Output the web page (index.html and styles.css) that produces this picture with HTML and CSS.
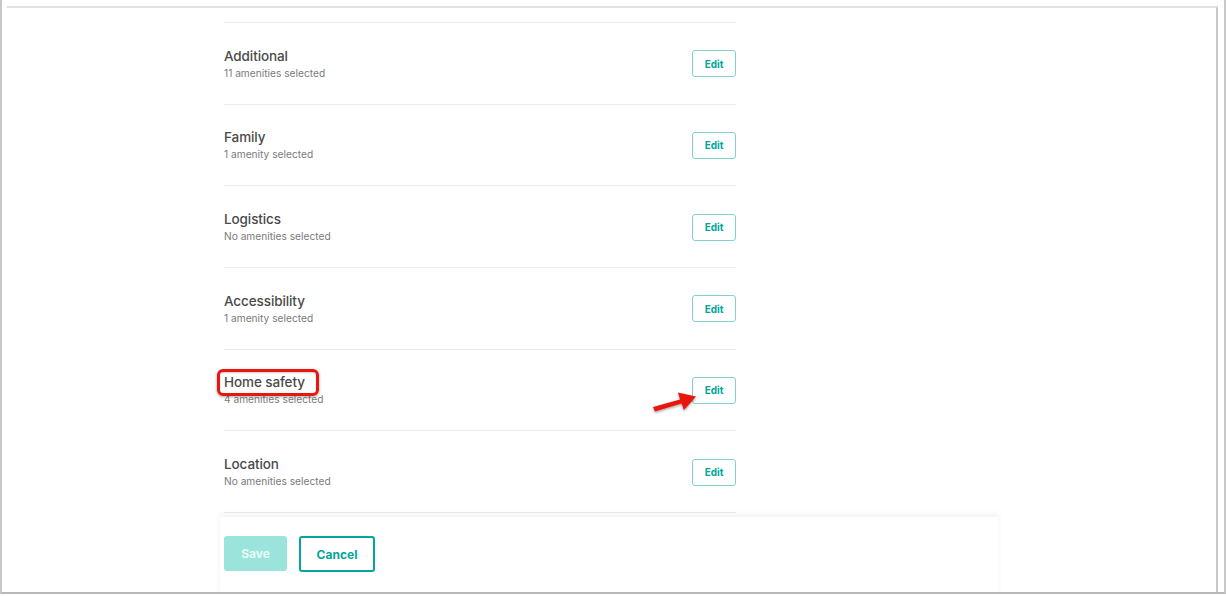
FILE: index.html
```html
<!DOCTYPE html>
<html>
<head>
<meta charset="utf-8">
<link rel="stylesheet" href="styles.css">
</head>
<body>
<div class="screen">
  <div class="window">
    <div class="list">
      <div class="row">
        <div class="info"><div class="title">Additional</div><div class="sub">11 amenities selected</div></div>
        <button class="edit">Edit</button>
      </div>
      <div class="row">
        <div class="info"><div class="title">Family</div><div class="sub">1 amenity selected</div></div>
        <button class="edit">Edit</button>
      </div>
      <div class="row">
        <div class="info"><div class="title">Logistics</div><div class="sub">No amenities selected</div></div>
        <button class="edit">Edit</button>
      </div>
      <div class="row">
        <div class="info"><div class="title">Accessibility</div><div class="sub">1 amenity selected</div></div>
        <button class="edit">Edit</button>
      </div>
      <div class="row">
        <div class="info"><div class="title">Home safety</div><div class="sub">4 amenities selected</div></div>
        <button class="edit">Edit</button>
      </div>
      <div class="row">
        <div class="info"><div class="title">Location</div><div class="sub">No amenities selected</div></div>
        <button class="edit">Edit</button>
      </div>
      <div class="row last"></div>
    </div>
    <div class="footer">
      <button class="save">Save</button>
      <button class="cancel">Cancel</button>
    </div>
    <div class="highlight"></div>
    <svg class="arrow" width="60" height="36" viewBox="0 0 60 36">
      <defs>
        <filter id="sh" x="-20%" y="-20%" width="140%" height="160%">
          <feDropShadow dx="0" dy="1.5" stdDeviation="1.2" flood-color="#000" flood-opacity="0.35"/>
        </filter>
      </defs>
      <g filter="url(#sh)">
        <path d="M3 29 L30 21.5 L28 14.5 L46 18.5 L34 32 L31.5 25.5 L5 33.5 Z" fill="#e8160c"/>
      </g>
    </svg>
  </div>
</div>
</body>
</html>
```

FILE: styles.css
```css
* { box-sizing: border-box; }
html, body {
  margin: 0;
  padding: 0;
  background: #fff;
}
body {
  width: 1226px;
  height: 596px;
  overflow: hidden;
  font-family: Inter, "Noto Sans", sans-serif;
}
.screen {
  width: 1226px;
  height: 594px;
  border-left: 2px solid #c8c8c8;
  border-right: 2px solid #c8c8c8;
  border-bottom: 2px solid #b8b8b8;
  padding: 6px 5px 0 5px;
}
.window {
  position: relative;
  height: 586px;
  border-top: 2px solid #e2e2e2;
  border-right: 2px solid #c8c8c8;
  margin-right: 1px;
  overflow: hidden;
}
.list {
  margin-left: 217px;
  width: 512px;
  padding-top: 14px;
}
.row {
  height: 81.67px;
  border-top: 1px solid #ebebeb;
  display: flex;
  align-items: center;
  justify-content: space-between;
}
.row.last {
  height: 40px;
}
.info {
  display: flex;
  flex-direction: column;
  gap: 2px;
}
.title {
  font-size: 13.5px;
  font-weight: 500;
  color: #4a4a4a;
  line-height: 18px;
  letter-spacing: -0.1px;
}
.sub {
  font-size: 10.2px;
  color: #7a7a7a;
  line-height: 13px;
}
.edit {
  width: 44px;
  height: 27px;
  border: 1.5px solid #80d3cc;
  border-radius: 3px;
  background: #fff;
  color: #00a699;
  font-family: Inter, "Noto Sans", sans-serif;
  font-size: 10px;
  font-weight: 700;
  padding: 0;
  margin-top: 1px;
}
.footer {
  position: absolute;
  left: 213px;
  top: 509px;
  width: 778px;
  height: 80px;
  background: #fff;
  box-shadow: 0 -3px 6px rgba(0,0,0,0.05);
  display: flex;
  align-items: flex-start;
  gap: 12px;
  padding: 19px 0 0 4px;
}
.save {
  width: 63px;
  height: 35px;
  border: none;
  border-radius: 3px;
  background: #9ae4dc;
  color: #e9fbf8;
  font-family: Inter, "Noto Sans", sans-serif;
  font-size: 12px;
  font-weight: 700;
}
.cancel {
  width: 76px;
  height: 36px;
  border: 2px solid #00a699;
  border-radius: 3px;
  background: #fff;
  color: #00a699;
  font-family: Inter, "Noto Sans", sans-serif;
  font-size: 12px;
  font-weight: 700;
}
.highlight {
  position: absolute;
  left: 210px;
  top: 361px;
  width: 102px;
  height: 27px;
  border: 3px solid #e8160c;
  border-radius: 6px;
  box-shadow: 0 1px 3px rgba(0,0,0,0.35), inset 0 1px 2px rgba(0,0,0,0.2);
}
.arrow {
  position: absolute;
  left: 643px;
  top: 370px;
}
```
